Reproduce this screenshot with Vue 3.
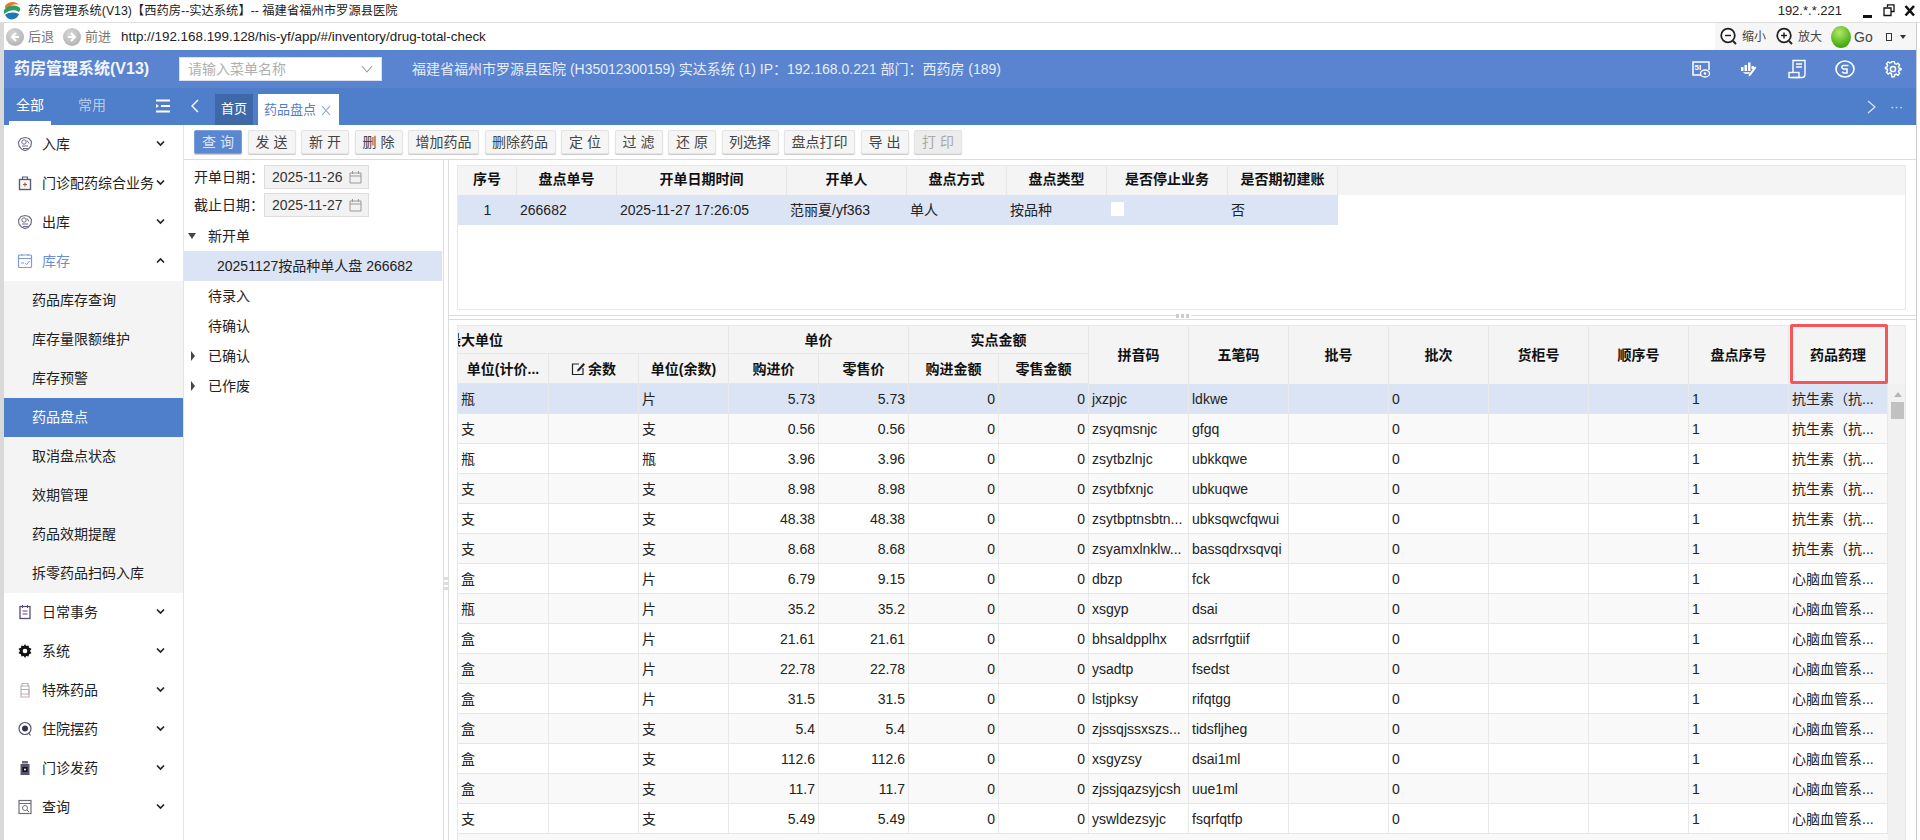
<script setup>
const icons = {
  hex: '<path d="M8 1.5l4 1 2.5 3 -.5 4.5 -3 3.5 -3 1 -3.5-1.5L2 10 1.5 6 4 2.5z" fill="none" stroke="#6f6f85" stroke-width="1.2"/><circle cx="7" cy="6" r="2.2" fill="none" stroke="#6f6f85"/><path d="M5 10h6M6 12.5h5M10 4.5l2 3" stroke="#6f6f85" fill="none"/>',
  lock: '<path d="M5.5 4.5V2h5v2.5" fill="none" stroke="#5c5c70" stroke-width="1.2"/><rect x="2.5" y="4.5" width="11" height="10" fill="none" stroke="#5c5c70" stroke-width="1.4"/><path d="M6 9.5h4M8 7.5v4" stroke="#b4503c" stroke-width="1.2"/>',
  box: '<rect x="1.5" y="2" width="13" height="12.5" rx="1" fill="none" stroke="#7d9bd8" stroke-width="1.2"/><path d="M1.5 5.5h13M5 1v2M11 1v2" stroke="#7d9bd8" fill="none"/><path d="M4 10h3M8 10l1.6 1.6L12.5 8" stroke="#7d9bd8" fill="none"/>',
  note: '<rect x="3" y="2.5" width="10" height="12" fill="none" stroke="#55506e" stroke-width="1.3"/><path d="M5.5 1v3M10.5 1v3M5.5 7h5M5.5 10h5" stroke="#703c78" fill="none"/>',
  gear: '<path d="M8 1l1.2 2 2.3-.6.6 2.3 2.4 1.1L13 8l1.5 2.2-2.4 1.1-.6 2.3-2.3-.6L8 15l-1.2-2-2.3.6-.6-2.3-2.4-1.1L3 8 1.500 5.800l2.400-1.100.6-2.300 2.300.6z" fill="#111"/><circle cx="8" cy="8" r="2.300" fill="#fff"/>',
  bottle: '<path d="M5 1.500h6v2.500H5z M4 4h8v11H4z" fill="none" stroke="#b3b3bc" stroke-width="1.200"/><path d="M4 7.500h8v4.500H4" fill="none" stroke="#c9a8a8"/>',
  target: '<circle cx="8" cy="7.500" r="6" fill="none" stroke="#55556a" stroke-width="1.200"/><circle cx="8" cy="7.500" r="3" fill="#33334a"/><path d="M11.500 12l2 2.500" stroke="#55556a" stroke-width="1.200"/>',
  dark: '<path d="M5 1h6v2.500H5z" fill="#6a6a78"/><rect x="3.500" y="4" width="9" height="11" fill="#55556a"/><rect x="5.500" y="7" width="5" height="5" fill="#111"/><circle cx="8" cy="9.500" r="1" fill="#fff"/>',
  search: '<rect x="2" y="1.500" width="12" height="13" fill="none" stroke="#6f6f7c" stroke-width="1.200"/><path d="M2 4.500h12" stroke="#6f6f7c"/><circle cx="8" cy="9" r="2.500" fill="none" stroke="#6f6f7c"/><path d="M10 11l2 2" stroke="#6f6f7c"/>'
}

const menuTop = [
  { label: '入库', icon: 'hex' },
  { label: '门诊配药综合业务', icon: 'lock' },
  { label: '出库', icon: 'hex' },
  { label: '库存', icon: 'box', open: true }
]
const subMenu = ['药品库存查询', '库存量限额维护', '库存预警', '药品盘点', '取消盘点状态', '效期管理', '药品效期提醒', '拆零药品扫码入库']
const menuBottom = [
  { label: '日常事务', icon: 'note' },
  { label: '系统', icon: 'gear' },
  { label: '特殊药品', icon: 'bottle' },
  { label: '住院摆药', icon: 'target' },
  { label: '门诊发药', icon: 'dark' },
  { label: '查询', icon: 'search' }
]
const buttons = [
  { t: '查 询', k: 'primary' }, { t: '发 送' }, { t: '新 开' }, { t: '删 除' }, { t: '增加药品' }, { t: '删除药品' },
  { t: '定 位' }, { t: '过 滤' }, { t: '还 原' }, { t: '列选择' }, { t: '盘点打印' }, { t: '导 出' }, { t: '打 印', k: 'disabled' }
]
const topCols = [
  { t: '序号', w: 59 }, { t: '盘点单号', w: 100 }, { t: '开单日期时间', w: 170 }, { t: '开单人', w: 120 },
  { t: '盘点方式', w: 100 }, { t: '盘点类型', w: 100 }, { t: '是否停止业务', w: 121 }, { t: '是否期初建账', w: 110 }
]
const topCells = ['266682', '2025-11-27 17:26:05', '范丽夏/yf363', '单人', '按品种']

const K = '抗生素（抗...'
const X = '心脑血管系...'
const rows = [
  ['瓶', '片', '5.73', '5.73', 'jxzpjc', 'ldkwe', K],
  ['支', '支', '0.56', '0.56', 'zsyqmsnjc', 'gfgq', K],
  ['瓶', '瓶', '3.96', '3.96', 'zsytbzlnjc', 'ubkkqwe', K],
  ['支', '支', '8.98', '8.98', 'zsytbfxnjc', 'ubkuqwe', K],
  ['支', '支', '48.38', '48.38', 'zsytbptnsbtn...', 'ubksqwcfqwui', K],
  ['支', '支', '8.68', '8.68', 'zsyamxlnklw...', 'bassqdrxsqvqi', K],
  ['盒', '片', '6.79', '9.15', 'dbzp', 'fck', X],
  ['瓶', '片', '35.2', '35.2', 'xsgyp', 'dsai', X],
  ['盒', '片', '21.61', '21.61', 'bhsaldpplhx', 'adsrrfgtiif', X],
  ['盒', '片', '22.78', '22.78', 'ysadtp', 'fsedst', X],
  ['盒', '片', '31.5', '31.5', 'lstjpksy', 'rifqtgg', X],
  ['盒', '支', '5.4', '5.4', 'zjssqjssxszs...', 'tidsfljheg', X],
  ['盒', '支', '112.6', '112.6', 'xsgyzsy', 'dsai1ml', X],
  ['盒', '支', '11.7', '11.7', 'zjssjqazsyjcsh', 'uue1ml', X],
  ['支', '支', '5.49', '5.49', 'yswldezsyjc', 'fsqrfqtfp', X]
]
const tailHeads = ['拼音码', '五笔码', '批号', '批次', '货柜号', '顺序号', '盘点序号', '药品药理']
</script>

<template>
  <div class="app">
    <div class="titlebar">
      <svg class="logo" viewBox="0 0 20 20">
        <circle cx="10" cy="10" r="9.500" fill="#fff"/>
        <path d="M3 5C6 0 14 0 17 4 12 2 8 4 5 9 3.500 8 3 7 3 5z" fill="#e8792a"/>
        <path d="M2 9c3-4 9-6 15-3 2 2 1 4 0 5-4-3-10-2-15 2z" fill="#2f9e62"/>
        <path d="M3 14c4-3 9-3 14-1-2 6-10 8-14 1z" fill="#1f77b8"/>
      </svg>
      <span class="title-text">药房管理系统(V13)【西药房--实达系统】-- 福建省福州市罗源县医院</span>
      <span class="title-ip">192.*.*.221</span>
      <div class="winbtns">
        <svg width="12" height="14" viewBox="0 0 12 14"><rect x="1" y="11" width="9" height="3" fill="#111"/></svg>
        <svg width="12" height="14" viewBox="0 0 12 14"><path d="M4.500 3V.8h6.500v6.700H8.500M1 4h7v7.500H1z" fill="none" stroke="#111" stroke-width="1.300"/></svg>
        <svg width="12" height="14" viewBox="0 0 12 14"><path d="M1.500 2l8.500 9.500M10 2L1.500 11.500" stroke="#111" stroke-width="2.600"/></svg>
      </div>
    </div>

    <div class="shell">
      <div class="urlbar">
        <span class="navball"><svg width="12" height="12" viewBox="0 0 12 12"><path d="M7 2L3 6l4 4M3 6h7" fill="none" stroke="#fff" stroke-width="2"/></svg></span>
        <span class="navtext">后退</span>
        <span class="navball second"><svg width="12" height="12" viewBox="0 0 12 12"><path d="M5 2l4 4-4 4M9 6H2" fill="none" stroke="#fff" stroke-width="2"/></svg></span>
        <span class="navtext">前进</span>
        <span class="url">http://192.168.199.128/his-yf/app/#/inventory/drug-total-check</span>
        <div class="urltools">
          <svg width="18" height="20" viewBox="0 0 18 20"><circle cx="8" cy="8.500" r="6.800" fill="#fff" stroke="#222" stroke-width="1.800"/><path d="M5 8.500h6" stroke="#222" stroke-width="1.500"/><path d="M13 14l3 3" stroke="#222" stroke-width="2"/></svg>
          <span class="tooltext">缩小</span>
          <svg class="t-plus" width="18" height="20" viewBox="0 0 18 20"><circle cx="8" cy="8.500" r="6.800" fill="#fff" stroke="#222" stroke-width="1.800"/><path d="M5 8.500h6M8 5.500v6" stroke="#222" stroke-width="1.500"/><path d="M13 14l3 3" stroke="#222" stroke-width="2"/></svg>
          <span class="tooltext">放大</span>
          <span class="ball"></span>
          <span class="tooltext go">Go</span>
          <span class="smallsq"></span>
          <span class="smallcaret"></span>
        </div>
      </div>

      <div class="header">
        <div class="brand">药房管理系统(V13)</div>
        <div class="search">
          <span>请输入菜单名称</span>
          <svg width="12" height="8" viewBox="0 0 12 8"><path d="M1 1l5 6 5-6" fill="none" stroke="#999" stroke-width="1.100"/></svg>
        </div>
        <div class="info">福建省福州市罗源县医院 (H35012300159) 实达系统 (1) IP：192.168.0.221 部门：西药房 (189)</div>
        <div class="hicons">
          <svg width="20" height="18" viewBox="0 0 20 18"><path d="M10 15H2V2h16v8" fill="none" stroke="#fff" stroke-width="1.500"/><text x="3.500" y="10" font-size="8" font-weight="700" fill="#fff" font-family="Liberation Sans">5I</text><ellipse cx="14" cy="13.500" rx="4.500" ry="3.500" fill="#5a84cf" stroke="#fff" stroke-width="1.300"/><circle cx="14" cy="13.500" r="1.300" fill="#fff"/></svg>
          <svg width="18" height="18" viewBox="0 0 18 18"><path d="M1 7h2.500v4H1zM4.500 5H7v6H4.500zM8 2.500h2.500V11H8zM11.500 6H14v3h-2.500z" fill="#fff"/><path d="M3 12h7l-1 2H5z" fill="#dfe8f8"/><path d="M16.500 7.500l-6 8-2 1 .5-2.500 6-7.500z" fill="#fff"/></svg>
          <svg width="18" height="20" viewBox="0 0 18 20"><path d="M5 13V1.500h12V15c0 2-1 3.500-3 3.500H3" fill="none" stroke="#fff" stroke-width="1.400"/><path d="M8 5h6M8 8h6" stroke="#fff" stroke-width="1.300"/><rect x="1" y="13.500" width="10" height="5" fill="none" stroke="#fff" stroke-width="1.400"/></svg>
          <svg width="20" height="18" viewBox="0 0 20 18"><ellipse cx="10" cy="9" rx="9" ry="8" fill="none" stroke="#fff" stroke-width="1.600"/><path d="M13.500 5.500H8.500C6.500 5.500 6 8.500 8.500 9H12v4H9l-2-1" fill="none" stroke="#fff" stroke-width="1.500"/></svg>
          <svg width="18" height="18" viewBox="0 0 18 18"><path d="M7.500 1h3l.5 2.300 1.800.8 2-1.300 2 2.200-1.300 2 .7 1.800 2.300.5v1.400l-2.300.5-.7 1.800 1.300 2-2 2.200-2-1.300-1.800.8-.5 2.300h-3L7 15.200l-1.800-.8-2 1.300-2-2.200 1.300-2-.7-1.800L0 9.200V7.800l1.800-.5.7-1.800-1.300-2 2-2.200 2 1.300L7 1.800z" transform="translate(1.500 .8) scale(.84)" fill="none" stroke="#fff" stroke-width="1.700"/><circle cx="9" cy="9" r="2.600" fill="none" stroke="#fff" stroke-width="1.500"/></svg>
        </div>
      </div>

      <div class="tabbar">
        <div class="sidehead">
          <span class="stab on">全部</span>
          <span class="stab muted">常用</span>
          <svg class="burger" width="14" height="14" viewBox="0 0 14 14"><path d="M0 1.500h14M5 7h9M0 12.500h14" stroke="#fff" stroke-width="2.200"/><path d="M0 5l3 2-3 2z" fill="#fff"/></svg>
        </div>
        <svg class="tabprev" width="9" height="14" viewBox="0 0 9 14"><path d="M8 1L2 7l6 6" fill="none" stroke="#fff" stroke-width="1.400"/></svg>
        <span class="tab home">首页</span>
        <span class="tab active">药品盘点<svg class="tabx" width="10" height="11" viewBox="0 0 10 11"><path d="M1 1l8 9M9 1l-8 9" stroke="#7f9fdc" stroke-width="1.100"/></svg></span>
        <div class="tabend">
          <svg width="10" height="14" viewBox="0 0 10 14"><path d="M1 1l7 6-7 6" fill="none" stroke="#dfe8f8" stroke-width="1.200"/></svg>
          <span class="dots">···</span>
        </div>
      </div>

      <div class="main">
        <aside class="sidebar">
          <div v-for="m in menuTop" :key="m.label" class="mitem" :class="{ blue: m.open }">
            <svg class="micon" viewBox="0 0 16 16" v-html="icons[m.icon]"></svg>
            <span class="mlabel">{{ m.label }}</span>
            <svg class="mchev" width="9" height="7" viewBox="0 0 9 7"><path :d="m.open ? 'M1 5.500L4.500 2 8 5.500' : 'M1 1.500L4.500 5 8 1.500'" fill="none" stroke="#222" stroke-width="1.700"/></svg>
          </div>
          <div class="submenu">
            <div v-for="s in subMenu" :key="s" class="sitem" :class="{ on: s === '药品盘点' }">{{ s }}</div>
          </div>
          <div v-for="m in menuBottom" :key="m.label" class="mitem">
            <svg class="micon" viewBox="0 0 16 16" v-html="icons[m.icon]"></svg>
            <span class="mlabel">{{ m.label }}</span>
            <svg class="mchev" width="9" height="7" viewBox="0 0 9 7"><path d="M1 1.500L4.500 5 8 1.500" fill="none" stroke="#222" stroke-width="1.700"/></svg>
          </div>
        </aside>

        <section class="content">
          <div class="toolbar">
            <button v-for="b in buttons" :key="b.t" class="btn" :class="b.k">{{ b.t }}</button>
          </div>
          <div class="panes">
            <div class="leftpane">
              <div class="daterow">
                <span class="dlabel">开单日期：</span>
                <span class="dinput">2025-11-26<svg width="13" height="14" viewBox="0 0 13 14"><path d="M1 3h11v10H1zM1 6h11M3.500 1v3M9.500 1v3" fill="none" stroke="#999"/></svg></span>
              </div>
              <div class="daterow">
                <span class="dlabel">截止日期：</span>
                <span class="dinput">2025-11-27<svg width="13" height="14" viewBox="0 0 13 14"><path d="M1 3h11v10H1zM1 6h11M3.500 1v3M9.500 1v3" fill="none" stroke="#999"/></svg></span>
              </div>
              <div class="tree">
                <div class="node"><span class="tri down"></span>新开单</div>
                <div class="node sel">20251127按品种单人盘 266682</div>
                <div class="node"><span class="tri none"></span>待录入</div>
                <div class="node"><span class="tri none"></span>待确认</div>
                <div class="node"><span class="tri right"></span>已确认</div>
                <div class="node"><span class="tri right"></span>已作废</div>
              </div>
            </div>

            <div class="vsplit"><span class="grip"></span></div>

            <div class="rightpane">
              <div class="toppane">
                <div class="tgrid">
                  <div class="trow thead">
                    <div v-for="c in topCols" :key="c.t" class="tcell" :style="{ width: c.w + 'px' }">{{ c.t }}</div>
                  </div>
                  <div class="trow tbodyrow">
                    <div class="tcell c" :style="{ width: topCols[0].w + 'px' }">1</div>
                    <div v-for="(v, i) in topCells" :key="v" class="tcell" :style="{ width: topCols[i + 1].w + 'px' }">{{ v }}</div>
                    <div class="tcell" :style="{ width: topCols[6].w + 'px' }"><span class="check"></span></div>
                    <div class="tcell" :style="{ width: topCols[7].w + 'px' }">否</div>
                  </div>
                </div>
              </div>
              <div class="hsplit"><span class="hgrip"></span></div>
              <div class="lowpane">
                <div class="lgrid">
                  <div class="lhead">
                    <div class="h g1"><span class="clipped">最大单位</span></div>
                    <div class="h g2">单价</div>
                    <div class="h g3">实点金额</div>
                    <div v-for="t in tailHeads" :key="t" class="h tall">{{ t }}</div>
                    <div class="h filler"></div>
                    <div class="h">单位(计价...</div>
                    <div class="h"><svg class="edit" width="14" height="14" viewBox="0 0 14 14"><path d="M8 2H1.500v10.500H12V6" fill="none" stroke="#222" stroke-width="1.200"/><path d="M12.500 1L6.500 7.500l-.5 2 2-.5 6-6.500z" fill="#222"/></svg>余数</div>
                    <div class="h">单位(余数)</div>
                    <div class="h">购进价</div>
                    <div class="h">零售价</div>
                    <div class="h">购进金额</div>
                    <div class="h">零售金额</div>
                  </div>
                  <div class="lbody">
                    <div class="lrows">
                      <div v-for="(r, i) in rows" :key="i" class="lrow" :class="{ picked: i === 0, odd: i % 2 === 1 }">
                        <div class="d">{{ r[0] }}</div>
                        <div class="d"></div>
                        <div class="d">{{ r[1] }}</div>
                        <div class="d r">{{ r[2] }}</div>
                        <div class="d r">{{ r[3] }}</div>
                        <div class="d r">0</div>
                        <div class="d r">0</div>
                        <div class="d">{{ r[4] }}</div>
                        <div class="d">{{ r[5] }}</div>
                        <div class="d"></div>
                        <div class="d">0</div>
                        <div class="d"></div>
                        <div class="d"></div>
                        <div class="d">1</div>
                        <div class="d">{{ r[6] }}</div>
                      </div>
                      <div class="lrow odd"></div>
                    </div>
                    <div class="vscroll"><span class="up"></span><span class="thumb"></span></div>
                  </div>
                  <div class="redbox"></div>
                </div>
              </div>
            </div>
          </div>
        </section>
      </div>
    </div>
  </div>
</template>

<style scoped>
* { box-sizing: border-box; }
.app {
  width: 1920px; height: 840px; overflow: hidden; background: #fff; display: flex; flex-direction: column;
  font: 14px/20px "Liberation Sans", "Noto Sans CJK SC", sans-serif; color: #222;
}
.titlebar { height: 23px; display: flex; align-items: center; position: relative; flex: none; border-bottom: 1px solid #dedede; padding-left: 2px; }
.logo { width: 20px; height: 20px; }
.title-text { margin-left: 6px; white-space: nowrap; font-size: 12.300px; }
.title-ip { margin-left: auto; font-size: 13px; }
.winbtns { display: flex; width: 78px; padding-left: 20px; gap: 9px; align-items: center; }

.shell { flex: 1; min-height: 0; width: 1917px; border-left: 4px solid #d9d9d9; border-right: 1px solid #ccc; display: flex; flex-direction: column; }

.urlbar { height: 27px; flex: none; display: flex; align-items: center; padding-left: 2px; font-size: 13px; }
.navball { width: 18px; height: 18px; border-radius: 50%; background: radial-gradient(circle at 40% 35%, #d8d8d8, #a9a9a9); display: flex; align-items: center; justify-content: center; }
.navball.second { margin-left: 9px; }
.navtext { margin-left: 4px; color: #777; }
.url { margin-left: 10px; font-size: 13.400px; color: #222; }
.urltools { margin-left: auto; width: 201px; height: 27px; background: #f6f6f6; display: flex; align-items: center; padding-left: 5px; }
.tooltext { font-size: 12px; margin-left: 4px; color: #444; }
.t-plus { margin-left: 10px; }
.ball { width: 20px; height: 22px; border-radius: 50%; margin-left: 9px; background: radial-gradient(circle at 42% 30%, #b5e86c, #55b51e 60%, #2f8a10); }
.tooltext.go { margin-left: 3px; font-size: 14px; }
.smallsq { width: 6px; height: 8px; border: 1px solid #333; margin-left: 13px; }
.smallcaret { margin-left: 8px; border: 3px solid transparent; border-top: 4px solid #333; border-bottom: 0; }

.header { height: 38px; flex: none; background: #5a84cf; display: flex; align-items: center; color: #e6edf9; }
.brand { margin-left: 10px; width: 165px; font-size: 16px; font-weight: 700; color: #f2f5fc; white-space: nowrap; }
.search { width: 203px; height: 24px; background: #fff; border: 1px solid #dbe3f2; display: flex; align-items: center; justify-content: space-between; padding: 0 8px; color: #b0b0b0; }
.info { margin-left: 30px; white-space: nowrap; }
.hicons { margin-left: auto; width: 240px; padding-right: 14px; display: flex; align-items: center; justify-content: space-between; padding-left: 15px; }

.tabbar { height: 37px; flex: none; background: #4f7ecb; display: flex; position: relative; color: #fff; }
.sidehead { width: 179px; display: flex; align-items: flex-start; position: relative; }
.stab { margin-top: 7px; height: 30px; line-height: 20px; text-align: center; }
.stab.on { width: 42px; margin-left: 5px; border-bottom: 4px solid #fff; height: 30px; }
.stab.muted { margin-left: 27px; color: #b8cbea; }
.burger { margin-left: 50px; margin-top: 11px; }
.tabprev { margin-left: 7px; margin-top: 11px; flex: none; }
.tab { height: 31px; margin-top: 6px; line-height: 30px; font-size: 13px; text-align: center; flex: none; }
.tab.home { width: 38px; margin-left: 16px; background: #3e68a8; }
.tab.active { width: 81px; margin-left: 5px; background: #fff; color: #4f7ecb; display: flex; align-items: center; padding-left: 6px; }
.tabx { margin-left: 5px; margin-top: 2px; }
.tabend { margin-left: auto; margin-right: 13px; display: flex; align-items: center; gap: 13px; height: 37px; }
.dots { font-size: 13px; letter-spacing: 0; color: #dfe8f8; }

.main { flex: 1; min-height: 0; display: flex; }
.sidebar { width: 180px; flex: none; border-right: 1px solid #e4e4e4; }
.mitem { height: 39px; display: flex; align-items: center; padding: 0 0 2px 13px; position: relative; }
.micon { width: 16px; height: 16px; flex: none; }
.mlabel { margin-left: 9px; white-space: nowrap; }
.mitem.blue .mlabel { color: #6b8fd2; }
.mchev { position: absolute; left: 152px; top: 15px; }
.submenu { background: #f4f4f4; }
.sitem { height: 39px; line-height: 38px; padding-left: 28px; white-space: nowrap; }
.sitem.on { background: #4f7ecb; color: #fff; }

.content { flex: 1; min-width: 0; display: flex; flex-direction: column; }
.toolbar { height: 35px; flex: none; border-bottom: 1px solid #dcdcdc; display: flex; gap: 5.500px; padding: 5px 0 0 10px; align-items: flex-start; }
.btn { height: 24px; min-width: 48px; padding: 0 6.500px; border: 1px solid #e4e4e4; background: #f5f5f5; border-radius: 2px; box-shadow: 0 1px 1px #c9c9c9; font: inherit; line-height: 20px; color: #444; white-space: pre; }
.btn.primary { background: #5b87d1; border-color: #7c9fdc; color: #dce6f7; }
.btn.disabled { background: #ececec; color: #aaa; }

.panes { flex: 1; min-height: 0; display: flex; }
.leftpane { width: 259px; flex: none; padding-top: 5px; }
.daterow { height: 24px; margin-bottom: 4px; display: flex; align-items: center; padding-left: 10px; }
.dlabel { width: 70px; white-space: nowrap; margin-top: -1px; }
.dinput { width: 105px; height: 24px; background: #f2f2f2; border: 1px solid #ddd; display: flex; align-items: center; justify-content: space-between; padding: 0 6px 0 7px; color: #333; }
.node { height: 30px; line-height: 28px; display: flex; align-items: center; padding-left: 4px; white-space: nowrap; }
.node.sel { background: #dbe4f5; padding-left: 33px; margin-right: 1px; }
.tri { width: 20px; height: 0; flex: none; }
.tri.down { position: relative; }
.tri.down::before { content: ""; position: absolute; left: 0; top: -3px; border: 4px solid transparent; border-top: 6px solid #444; border-bottom: 0; }
.tri.right { position: relative; }
.tri.right::before { content: ""; position: absolute; left: 3px; top: -5px; border: 5px solid transparent; border-left: 4px solid #444; border-right: 0; }

.vsplit { width: 6px; flex: none; border-left: 1px solid #ddd; border-right: 1px solid #ddd; position: relative; }
.grip { position: absolute; left: 0; top: 417px; width: 4px; height: 15px; background: repeating-linear-gradient(#ddd 0 3px, #fff 3px 5px); }

.rightpane { flex: 1; min-width: 0; display: flex; flex-direction: column; }
.toppane { height: 156px; flex: none; padding: 5px 10px 6px 8px; border-bottom: 1px solid #ddd; }
.tgrid { height: 145px; border: 1px solid #e8e8e8; }
.trow { display: flex; height: 30px; }
.thead { background: #f4f4f4; width: 100%; height: 29px; }
.thead .tcell { font-weight: 700; text-align: center; color: #111; border-right: 1px solid #e6e6e6; line-height: 27px; }
.tbodyrow { background: #dbe4f5; width: 880px; }
.tcell { flex: none; padding: 0 3px; line-height: 30px; white-space: nowrap; overflow: hidden; position: relative; }
.tcell.c { text-align: center; }
.check { display: block; width: 13px; height: 14px; margin: 7px 0 0 1px; background: #fff; border-radius: 1px; }

.hsplit { height: 3px; flex: none; position: relative; }
.hgrip { position: absolute; left: 727px; top: -2px; width: 15px; height: 4px; background: repeating-linear-gradient(90deg, #ccc 0 3px, #fff 3px 5px); }

.lowpane { flex: 1; min-height: 0; border-top: 1px solid #ddd; padding: 5px 10px 0 8px; }
.lgrid { height: 100%; border: 1px solid #e8e8e8; border-bottom: 0; position: relative; display: flex; flex-direction: column; }
.lhead {
  display: grid; flex: none; height: 58px; background: #f4f4f4;
  grid-template-columns: 91px repeat(6, 90px) repeat(7, 100px) 99px 1fr; grid-template-rows: 28px 30px; font-weight: 700; color: #111;
}
.h { border-right: 1px solid #e6e6e6; border-bottom: 1px solid #e6e6e6; display: flex; align-items: center; justify-content: center; white-space: nowrap; overflow: hidden; }
.g1 { grid-column: span 3; justify-content: flex-start; }
.clipped { margin-left: -11px; }
.g2, .g3 { grid-column: span 2; }
.tall { grid-row: span 2; border-bottom: 0; }
.filler { grid-row: span 2; border: 0; }
.edit { margin-right: 3px; }
.lbody { flex: 1; min-height: 0; display: flex; overflow: hidden; }
.lrows { width: 1430px; flex: none; }
.lrow { height: 30px; display: grid; grid-template-columns: 91px repeat(6, 90px) repeat(7, 100px) 99px; border-bottom: 1px solid #e6e6e6; }
.lrow.odd { background: #f9f9f9; }
.lrow.picked { background: #dbe4f5; }
.d { border-right: 1px solid #e8e8e8; padding: 0 3px; line-height: 30px; white-space: nowrap; overflow: hidden; color: #222; }
.d.r { text-align: right; }
.vscroll { flex: 1; background: #f1f1f1; padding: 8px 0 0 3px; display: flex; flex-direction: column; }
.up { width: 0; height: 0; margin-left: 3px; border: 4px solid transparent; border-bottom: 5px solid #b5b5b5; border-top: 0; }
.thumb { width: 13px; height: 17px; margin-top: 5px; background: #c1c1c1; }
.redbox { position: absolute; left: 1332px; top: -2px; width: 98px; height: 60px; border: 3px solid #f5565a; border-radius: 2px; pointer-events: none; }
</style>
